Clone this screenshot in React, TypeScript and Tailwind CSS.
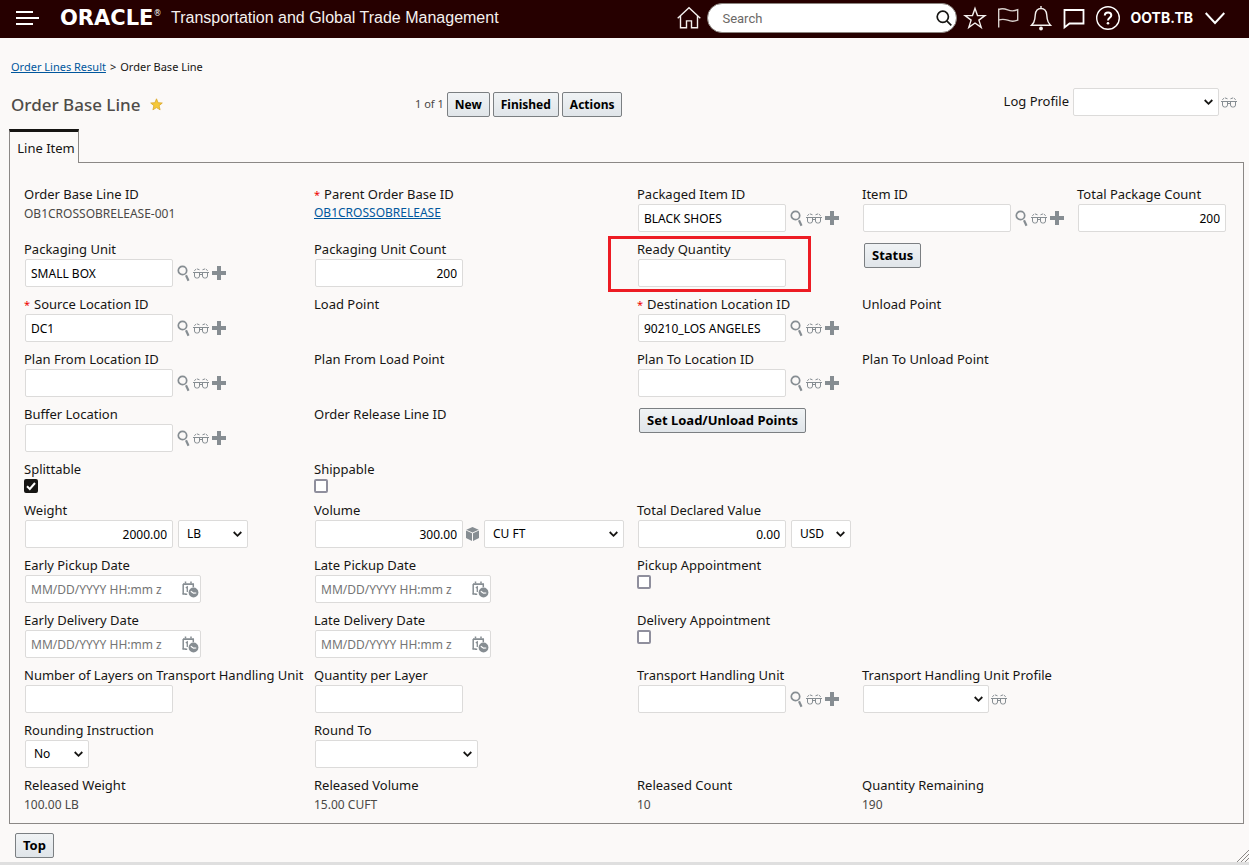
import React, { useId } from "react";

function MenuIcon() {
  return (
    <svg width="24" height="16" viewBox="0 0 24 16" stroke="#fff" strokeWidth="2" aria-hidden="true">
      <path d="M0 2h17M0 8h23M0 14h17" />
    </svg>
  );
}

function HomeIcon() {
  return (
    <svg width="24" height="24" viewBox="0 0 24 24" fill="none" stroke="#f4f0ee" strokeWidth="1.4" aria-hidden="true">
      <path d="M.7 12.2 12 1.8l11.3 10.4M3.5 10v11.8h6v-6.9h5v6.9h6V10" />
    </svg>
  );
}

function StarOutlineIcon() {
  return (
    <svg width="24" height="24" viewBox="0 0 24 24" fill="none" stroke="#f4f0ee" strokeWidth="1.4" aria-hidden="true">
      <path d="m12 2.4 2.5 7.2h7.4l-6 4.5 2.3 7.3L12 17l-6.2 4.4 2.3-7.3-6-4.5h7.4z" />
    </svg>
  );
}

function FlagIcon() {
  return (
    <svg width="24" height="24" viewBox="0 0 24 24" fill="none" stroke="#d8d0cc" strokeWidth="1.4" aria-hidden="true">
      <path d="M2.7 21.5v-19M2.7 3.7c3.5-2 6-1 9 .2 3 1.200 6 1.500 10-.2v10.500c-4 1.600-7 1.200-10 0-3-1-5.500-1.600-9 0" />
    </svg>
  );
}

function BellIcon() {
  return (
    <svg width="24" height="26" viewBox="0 0 24 26" fill="none" stroke="#f4f0ee" strokeWidth="1.4" aria-hidden="true">
      <path d="M2.500 20.300h19c-2-2-3-3.500-3.300-6.500l-.5-4.200C17.300 6 15 3.500 12 3.500S6.700 6 6.300 9.600l-.5 4.200c-.3 3-1.300 4.500-3.300 6.500ZM12 3.500V1" />
      <circle cx="12" cy="23.500" r="1.900" fill="#f4f0ee" stroke="none" />
    </svg>
  );
}

function ChatIcon() {
  return (
    <svg width="24" height="24" viewBox="0 0 24 24" fill="none" stroke="#fff" strokeWidth="1.800" aria-hidden="true">
      <path d="M2.500 4h19v13.500H7.500l-5 4z" />
    </svg>
  );
}

function HelpIcon() {
  return (
    <svg width="26" height="26" viewBox="0 0 26 26" fill="none" stroke="#fff" aria-hidden="true">
      <circle cx="13" cy="13" r="11.300" strokeWidth="1.400" />
      <path d="M9.800 10.600c0-2 1.400-3.200 3.300-3.200s3.200 1.100 3.200 2.800c0 2.500-3.300 2.600-3.300 5.200" strokeWidth="2" />
      <circle cx="13" cy="18.200" r="1.300" fill="#fff" stroke="none" />
    </svg>
  );
}

function HeaderChevron() {
  return (
    <svg width="20" height="14" viewBox="0 0 20 14" fill="none" stroke="#fff" strokeWidth="2" aria-hidden="true">
      <path d="m.700 2 9.300 10 9.300-10" />
    </svg>
  );
}

function HeaderSearchIcon() {
  return (
    <svg width="16" height="16" viewBox="0 0 16 16" fill="none" stroke="#161513" strokeWidth="1.700" aria-hidden="true">
      <circle cx="6.800" cy="6.800" r="5.600" />
      <path d="m10.800 10.800 4.500 4.500" />
    </svg>
  );
}

function FavoriteIcon() {
  return (
    <svg width="13" height="13" viewBox="0 0 13 13" fill="#f5c838" stroke="#d9a72a" strokeWidth=".8" aria-hidden="true">
      <path d="m6.500.8 1.600 3.900 4.200.3-3.200 2.700 1 4.100-3.600-2.200-3.600 2.200 1-4.100L.7 5l4.200-.3z" />
    </svg>
  );
}

function FindIcon() {
  return (
    <svg width="14" height="17" viewBox="0 0 14 17" fill="none" stroke="#868d92" aria-hidden="true">
      <circle cx="5.500" cy="5.500" r="4.200" strokeWidth="1.700" />
      <path d="m9 10.300 2.500 5.500" strokeWidth="2.200" />
    </svg>
  );
}

function GlassesIcon() {
  return (
    <svg width="16" height="12" viewBox="0 0 16 12" fill="none" stroke="#868d92" strokeWidth="1" aria-hidden="true">
      <path d="M0 5.500h16" />
      <path d="M1.500 5.500v3.500q0 2 2 2h1q2 0 2-2V5.500M9.500 5.500v3.500q0 2 2 2h1q2 0 2-2V5.500M6.500 7.500h3" />
      <path d="M1.300 3.700 3.200 2.100M4 1.900l2.500.9M14.700 3.700l-1.900-1.600M12 1.900l-2.500.9" />
    </svg>
  );
}

function PlusIcon() {
  return (
    <svg width="14" height="14" viewBox="0 0 14 14" fill="#868d92" aria-hidden="true">
      <path d="M5 0h4v5h5v4H9v5H5V9H0V5h5z" />
    </svg>
  );
}

function CubeIcon() {
  return (
    <svg width="13" height="14" viewBox="0 0 13 14" fill="#868d92" aria-hidden="true">
      <path d="M6.500 0 12.700 2.700 6.500 5.500.3 2.700zM0 3.600l6 2.700V14l-6-2.900zM13 3.600 7 6.300V14l6-2.900z" />
    </svg>
  );
}

function CalendarClockIcon() {
  return (
    <svg width="17" height="17" viewBox="0 0 17 17" fill="none" stroke="#868d92" aria-hidden="true">
      <path d="M5.200 13.300H3M1.200 13.300V3M11.300 3v3.300M3.500.500v2M9 .500v2" strokeWidth="1.500" />
      <path d="M1 3.200h11M.500 13h3" strokeWidth="1.700" />
      <path d="M3.800 6.900 5.300 6v5" strokeWidth="1.300" />
      <circle cx="11.500" cy="11.500" r="4.900" fill="#868d92" stroke="none" />
      <path d="m8.800 10.200 2.700 2 2.800-.2" stroke="#fff" strokeWidth="1.200" />
    </svg>
  );
}

function Chevron() {
  return (
    <svg
      className="pointer-events-none absolute top-2.5 right-1.5"
      width="9"
      height="8"
      viewBox="0 0 9 8"
      fill="none"
      stroke="#161513"
      strokeWidth="1.800"
      aria-hidden="true"
    >
      <path d="m.700 2 3.800 3.800L8.300 2" />
    </svg>
  );
}

function LookupIcons() {
  return (
    <span className="ml-1 flex items-center">
      <button type="button" aria-label="Find"><FindIcon /></button>
      <button type="button" aria-label="View" className="ml-0.5"><GlassesIcon /></button>
      <button type="button" aria-label="New" className="ml-[3px]"><PlusIcon /></button>
    </span>
  );
}

const box = "h-7 rounded-xs border border-[#dcdbda] bg-white text-xs text-black";

function Select({ value, width, id, label }: { value: string; width: string; id?: string; label?: string }) {
  return (
    <span className={"relative block " + width}>
      <select id={id} aria-label={label} defaultValue={value} className={box + " w-full appearance-none pr-5 pl-2"}>
        <option>{value}</option>
      </select>
      <Chevron />
    </span>
  );
}

function Button({ small, children }: { small?: boolean; children: React.ReactNode }) {
  return (
    <button
      type="button"
      className={
        "h-[25px] rounded-xs border border-[#7b7f82] bg-linear-to-b from-[#f0f3f5] to-[#e0e5e9] px-[7px] leading-[23px] font-bold whitespace-nowrap text-black " +
        (small ? "text-xs" : "text-[13px]")
      }
    >
      {children}
    </button>
  );
}

type FieldProps = {
  label: string;
  required?: boolean;
  htmlFor?: string;
  children?: React.ReactNode;
};

function Field({ label, required, htmlFor, children }: FieldProps) {
  const text = (
    <>
      {required && <span className="mr-1 text-[11px] text-[#e00]">*</span>}
      {label}
    </>
  );
  const style = "block h-[18px] text-[13px] leading-[18px] whitespace-nowrap text-[#161513]";
  return (
    <div className="pb-2">
      {htmlFor ? <label htmlFor={htmlFor} className={style}>{text}</label> : <div className={style}>{text}</div>}
      {children && <div className="mt-px flex items-center">{children}</div>}
    </div>
  );
}

type InputFieldProps = {
  label: string;
  value?: string;
  required?: boolean;
  right?: boolean;
  lookup?: boolean;
  children?: React.ReactNode;
};

function InputField({ label, value = "", required, right, lookup, children }: InputFieldProps) {
  const id = useId();
  return (
    <Field label={label} required={required} htmlFor={id}>
      <input id={id} defaultValue={value} className={box + " ml-px w-37 px-[5px]" + (right ? " text-right" : "")} />
      {lookup && <LookupIcons />}
      {children}
    </Field>
  );
}

function DateField({ label }: { label: string }) {
  const id = useId();
  return (
    <Field label={label} htmlFor={id}>
      <span className="relative ml-px block w-44">
        <input id={id} placeholder="MM/DD/YYYY HH:mm z" className={box + " w-full pr-6 pl-[5px] placeholder:text-[#757575]"} />
        <span className="absolute top-1.5 right-0.5"><CalendarClockIcon /></span>
      </span>
    </Field>
  );
}

function CheckField({ label, checked }: { label: string; checked?: boolean }) {
  const id = useId();
  return (
    <Field label={label} htmlFor={id}>
      <span className="relative block size-3.5">
        <input
          id={id}
          type="checkbox"
          defaultChecked={checked}
          className="peer block size-3.5 appearance-none rounded-xs border-2 border-[#8f8f9d] bg-white checked:border-[#161513] checked:bg-[#161513]"
        />
        <svg
          className="pointer-events-none absolute top-0 left-0 hidden peer-checked:block"
          width="14"
          height="14"
          viewBox="0 0 14 14"
          fill="none"
          stroke="#fff"
          strokeWidth="2"
          aria-hidden="true"
        >
          <path d="m3 7.300 2.800 2.700L11 4" />
        </svg>
      </span>
    </Field>
  );
}

function SelectField({ label, value = "", width, children }: { label: string; value?: string; width: string; children?: React.ReactNode }) {
  const id = useId();
  return (
    <Field label={label} htmlFor={id}>
      <Select id={id} value={value} width={"ml-px " + width} />
      {children}
    </Field>
  );
}

function ValueField({ label, value }: { label: string; value: string }) {
  return (
    <Field label={label}>
      <span className="text-xs leading-5 text-[#4a4846]">{value}</span>
    </Field>
  );
}

function Row({ children }: { children: React.ReactNode }) {
  return <div className="grid grid-cols-[290fr_323fr_225fr_215fr_166fr]">{children}</div>;
}

function Header() {
  return (
    <header className="flex h-[38px] items-center bg-[#260000] pr-6 pb-0.5 pl-4">
      <button type="button" aria-label="Menu"><MenuIcon /></button>
      <span className="ml-5 flex w-[107px] items-center font-['DejaVu_Sans'] text-[21px] leading-5 font-bold text-white">
        ORACLE<sup className="text-[8px] leading-none font-normal">®</sup>
      </span>
      <h1 className="ml-1 font-['Liberation_Sans'] text-base whitespace-nowrap text-[#f5f1ef]">
        Transportation and Global Trade Management
      </h1>
      <div className="ml-auto flex items-center">
        <button type="button" aria-label="Home"><HomeIcon /></button>
        <div className="relative ml-1.5 w-[250px]">
          <input
            aria-label="Search"
            placeholder="Search"
            className="block h-[30px] w-full rounded-full border border-[#8b8580] bg-white pr-9 pl-3.5 font-[Roboto] text-[13px] text-black placeholder:text-[#6b6866]"
          />
          <button type="button" aria-label="Run search" className="absolute top-[7px] right-[5px]"><HeaderSearchIcon /></button>
        </div>
        <div className="ml-1.5 flex items-center gap-[9px]">
          <button type="button" aria-label="Favorites"><StarOutlineIcon /></button>
          <button type="button" aria-label="Flags"><FlagIcon /></button>
          <button type="button" aria-label="Notifications"><BellIcon /></button>
          <button type="button" aria-label="Messages"><ChatIcon /></button>
          <button type="button" aria-label="Help"><HelpIcon /></button>
        </div>
        <button type="button" className="ml-[9px] flex items-center gap-3 font-[Inter] text-sm font-bold text-white">
          OOTB.TB
          <HeaderChevron />
        </button>
      </div>
    </header>
  );
}

export default function App() {
  return (
    <div className="flex min-h-screen flex-col bg-[#fbf9f8] font-['Noto_Sans',sans-serif] text-[#161513]">
      <Header />

      <nav className="mt-5 ml-[11px] flex gap-1 text-[11px] leading-[18px]">
        <a href="#results" className="text-[#00579d] underline">Order Lines Result</a>
        <span>&gt;</span>
        <span>Order Base Line</span>
      </nav>

      <div className="mt-3 flex h-[33px] items-start pr-3 pl-[11px]">
        <div className="flex h-full w-[404px] items-center">
          <h2 className="text-[17px] leading-6 font-medium text-[#4f4c49]">Order Base Line</h2>
          <span className="ml-2.5"><FavoriteIcon /></span>
        </div>
        <div className="flex h-full items-center gap-[3px]">
          <span className="text-[11px] text-[#4a4846]">1 of 1</span>
          <Button small>New</Button>
          <Button small>Finished</Button>
          <Button small>Actions</Button>
        </div>
        <div className="flex flex-1 items-center justify-end">
          <label htmlFor="log-profile" className="mr-1 text-[13px]">Log Profile</label>
          <Select id="log-profile" value="" width="w-[146px]" />
          <button type="button" aria-label="View log profile" className="ml-0.5"><GlassesIcon /></button>
        </div>
      </div>

      <main className="mt-2 mr-[5px] ml-[9px]">
        <div className="flex">
          <button
            type="button"
            role="tab"
            aria-selected="true"
            className="h-[34px] w-[70px] border-x border-t-3 border-x-[#8b8886] border-t-[#161513] pt-px pl-1 text-center text-[13px] leading-[18px] whitespace-nowrap"
          >
            Line Item
          </button>
          <div className="flex-1 border-b border-[#8b8886]" />
        </div>

        <section className="border border-t-0 border-[#8b8886] pt-[22px] pl-3.5">
          <Row>
            <ValueField label="Order Base Line ID" value="OB1CROSSOBRELEASE-001" />
            <Field label="Parent Order Base ID" required>
              <a href="#order-base" className="text-xs leading-[18px] text-[#00579d] underline">OB1CROSSOBRELEASE</a>
            </Field>
            <InputField label="Packaged Item ID" value="BLACK SHOES" lookup />
            <InputField label="Item ID" lookup />
            <InputField label="Total Package Count" value="200" right />
          </Row>
          <Row>
            <InputField label="Packaging Unit" value="SMALL BOX" lookup />
            <InputField label="Packaging Unit Count" value="200" right />
            <div className="relative">
              <InputField label="Ready Quantity" />
              <div className="pointer-events-none absolute -top-1 -left-[29px] h-14 w-[203px] border-3 border-[#ed1c24]" />
            </div>
            <div className="pt-0.5 pl-0.5"><Button>Status</Button></div>
          </Row>
          <Row>
            <InputField label="Source Location ID" value="DC1" required lookup />
            <Field label="Load Point" />
            <InputField label="Destination Location ID" value="90210_LOS ANGELES" required lookup />
            <Field label="Unload Point" />
          </Row>
          <Row>
            <InputField label="Plan From Location ID" lookup />
            <Field label="Plan From Load Point" />
            <InputField label="Plan To Location ID" lookup />
            <Field label="Plan To Unload Point" />
          </Row>
          <Row>
            <InputField label="Buffer Location" lookup />
            <Field label="Order Release Line ID" />
            <div className="pt-0.5 pl-0.5"><Button>Set Load/Unload Points</Button></div>
          </Row>
          <Row>
            <CheckField label="Splittable" checked />
            <CheckField label="Shippable" />
          </Row>
          <Row>
            <InputField label="Weight" value="2000.00" right>
              <Select label="Weight unit" value="LB" width="ml-[5px] w-[70px]" />
            </InputField>
            <InputField label="Volume" value="300.00" right>
              <button type="button" aria-label="Calculate volume" className="ml-[3px]"><CubeIcon /></button>
              <Select label="Volume unit" value="CU FT" width="ml-[5px] w-35" />
            </InputField>
            <InputField label="Total Declared Value" value="0.00" right>
              <Select label="Currency" value="USD" width="ml-[5px] w-15" />
            </InputField>
          </Row>
          <Row>
            <DateField label="Early Pickup Date" />
            <DateField label="Late Pickup Date" />
            <CheckField label="Pickup Appointment" />
          </Row>
          <Row>
            <DateField label="Early Delivery Date" />
            <DateField label="Late Delivery Date" />
            <CheckField label="Delivery Appointment" />
          </Row>
          <Row>
            <InputField label="Number of Layers on Transport Handling Unit" />
            <InputField label="Quantity per Layer" />
            <InputField label="Transport Handling Unit" lookup />
            <SelectField label="Transport Handling Unit Profile" width="w-[126px]">
              <button type="button" aria-label="View profile" className="ml-0.5"><GlassesIcon /></button>
            </SelectField>
          </Row>
          <Row>
            <SelectField label="Rounding Instruction" value="No" width="w-16" />
            <SelectField label="Round To" width="w-[163px]" />
          </Row>
          <Row>
            <ValueField label="Released Weight" value="100.00 LB" />
            <ValueField label="Released Volume" value="15.00 CUFT" />
            <ValueField label="Released Count" value="10" />
            <ValueField label="Quantity Remaining" value="190" />
          </Row>
        </section>
      </main>

      <footer className="mt-auto flex items-end justify-between border-b-3 border-[#dfdfdf] pt-2 pl-[15px]">
        <div className="flex pb-1"><Button>Top</Button></div>
        <svg width="12" height="12" viewBox="0 0 12 12" stroke="#8b8886" strokeWidth="1" aria-hidden="true">
          <path d="M0 12 12 0M4 12l8-8M8 12l4-4" />
        </svg>
      </footer>
    </div>
  );
}
